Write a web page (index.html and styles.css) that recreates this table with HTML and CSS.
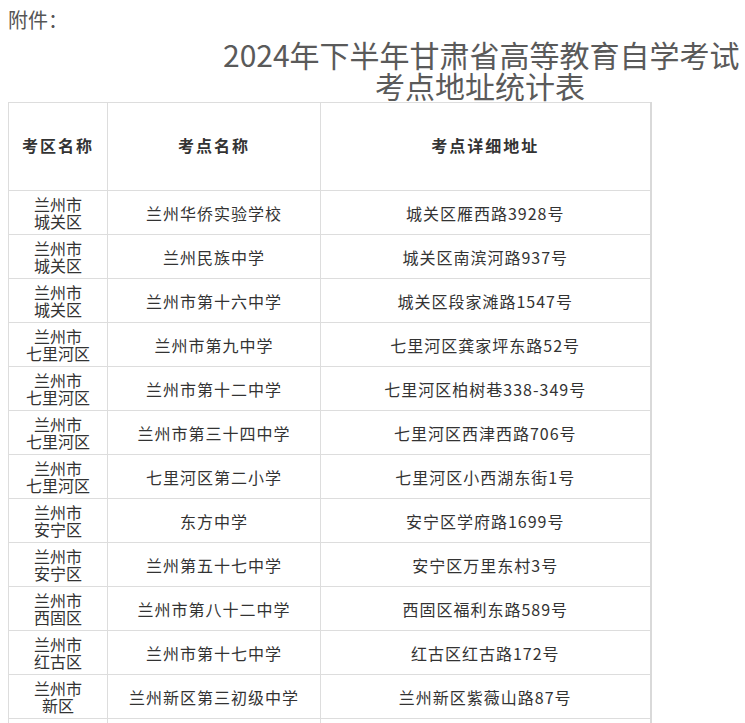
FILE: index.html
```html
<!DOCTYPE html>
<html lang="zh-CN">
<head>
<meta charset="utf-8">
<title>2024年下半年甘肃省高等教育自学考试考点地址统计表</title>
<link rel="stylesheet" href="styles.css">
</head>
<body>
<div class="page">
  <div class="attach">附件：</div>
  <h1 class="title">2024年下半年甘肃省高等教育自学考试<br>考点地址统计表</h1>
  <table class="sites">
    <colgroup>
      <col class="c-area">
      <col class="c-name">
      <col class="c-addr">
    </colgroup>
    <thead>
      <tr class="head-row">
        <th>考区名称</th>
        <th>考点名称</th>
        <th class="last">考点详细地址</th>
      </tr>
    </thead>
    <tbody>
      <tr><td class="area">兰州市<br>城关区</td><td>兰州华侨实验学校</td><td class="last">城关区雁西路3928号</td></tr>
      <tr><td class="area">兰州市<br>城关区</td><td>兰州民族中学</td><td class="last">城关区南滨河路937号</td></tr>
      <tr><td class="area">兰州市<br>城关区</td><td>兰州市第十六中学</td><td class="last">城关区段家滩路1547号</td></tr>
      <tr><td class="area">兰州市<br>七里河区</td><td>兰州市第九中学</td><td class="last">七里河区龚家坪东路52号</td></tr>
      <tr><td class="area">兰州市<br>七里河区</td><td>兰州市第十二中学</td><td class="last">七里河区柏树巷338-349号</td></tr>
      <tr><td class="area">兰州市<br>七里河区</td><td>兰州市第三十四中学</td><td class="last">七里河区西津西路706号</td></tr>
      <tr><td class="area">兰州市<br>七里河区</td><td>七里河区第二小学</td><td class="last">七里河区小西湖东街1号</td></tr>
      <tr><td class="area">兰州市<br>安宁区</td><td>东方中学</td><td class="last">安宁区学府路1699号</td></tr>
      <tr><td class="area">兰州市<br>安宁区</td><td>兰州第五十七中学</td><td class="last">安宁区万里东村3号</td></tr>
      <tr><td class="area">兰州市<br>西固区</td><td>兰州市第八十二中学</td><td class="last">西固区福利东路589号</td></tr>
      <tr><td class="area">兰州市<br>红古区</td><td>兰州市第十七中学</td><td class="last">红古区红古路172号</td></tr>
      <tr><td class="area">兰州市<br>新区</td><td>兰州新区第三初级中学</td><td class="last">兰州新区紫薇山路87号</td></tr>
      <tr><td class="area">&nbsp;</td><td>&nbsp;</td><td class="last">&nbsp;</td></tr>
    </tbody>
  </table>
</div>
</body>
</html>
```
FILE: styles.css
```css
html, body {
  margin: 0;
  padding: 0;
  background: #ffffff;
}

body {
  font-family: "Noto Sans CJK SC", "Noto Sans", "Liberation Sans", sans-serif;
  color: #333333;
}

.page {
  padding: 6px 8px 0 8px;
}

.attach {
  font-size: 20px;
  line-height: 28px;
  color: #555555;
}

.title {
  margin: 5px 0 1px 0;
  padding-left: 215px;
  font-size: 30px;
  line-height: 31px;
  font-weight: normal;
  color: #5a5a5a;
  text-align: center;
  white-space: nowrap;
}

.sites {
  border-collapse: collapse;
  table-layout: fixed;
  width: 642px;
}

.c-area { width: 99px; }
.c-name { width: 213px; }
.c-addr { width: 330px; }

.sites th,
.sites td {
  border: 1px solid #dddddd;
  text-align: center;
  vertical-align: middle;
  padding: 0 4px;
}

.sites th {
  height: 83px;
  font-size: 16px;
  line-height: 20px;
  font-weight: bold;
  letter-spacing: 2px;
  color: #333333;
  padding-bottom: 4px;
}

.sites td {
  height: 43px;
  font-size: 16px;
  line-height: 18px;
  letter-spacing: 1px;
  color: #333333;
}

.sites td.area {
  letter-spacing: 0;
  line-height: 17px;
}

.sites .last {
  border-right: 2px solid #d9d9d9;
}
```
